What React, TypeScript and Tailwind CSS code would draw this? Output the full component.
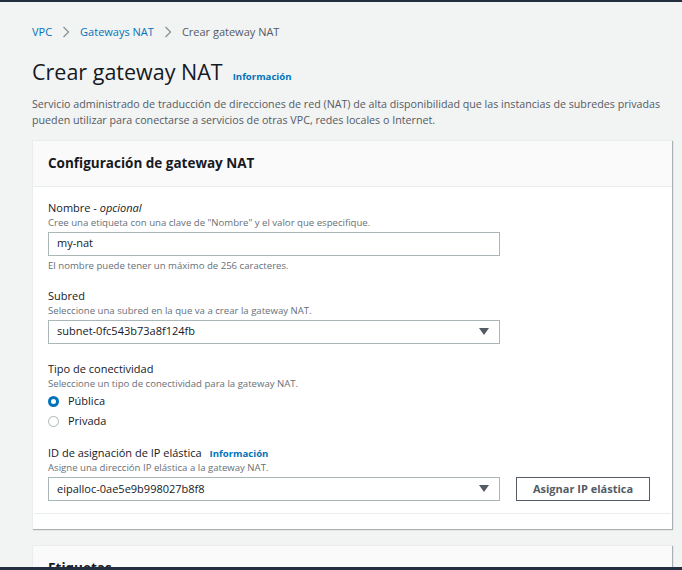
import React from "react";

const font = { fontFamily: '"Open Sans", "Noto Sans", sans-serif' };

function Caret() {
  return (
    <svg width="10" height="7" viewBox="0 0 10 7" className="shrink-0">
      <path d="M0 0 H10 L5 7 Z" fill="#545b64" />
    </svg>
  );
}

function Chevron() {
  return (
    <svg width="8" height="12" viewBox="0 0 8 12" className="mx-[10px]">
      <path d="M1.5 1 L6.5 6 L1.5 11" fill="none" stroke="#879596" strokeWidth="1.3" />
    </svg>
  );
}

function Select({ value }: { value: string }) {
  return (
    <div className="flex h-[24px] w-[452px] items-center justify-between border border-[#aab7b8] bg-white pl-[8px] pr-[10px] text-[11px] text-[#16191f]">
      <span>{value}</span>
      <Caret />
    </div>
  );
}

function Radio({ checked, label }: { checked: boolean; label: string }) {
  return (
    <div className="flex h-[20px] items-center gap-[9px]">
      {checked ? (
        <span className="box-border h-[11px] w-[11px] rounded-full border-[3px] border-[#0073bb] bg-white" />
      ) : (
        <span className="box-border h-[11px] w-[11px] rounded-full border border-[#aab7b8] bg-white" />
      )}
      <span className="text-[11px] text-[#16191f]">{label}</span>
    </div>
  );
}

export default function App() {
  return (
    <div style={font} className="flex h-[570px] w-[682px] flex-col overflow-hidden bg-[#f2f3f3]">
      <div className="h-[2px] shrink-0 bg-[#232f3e]" />
      <div className="flex flex-1 flex-col overflow-hidden pl-[32px] pr-[10px]">
        <div className="mt-[22px] flex h-[18px] items-center text-[11px]">
          <span className="text-[#0073bb]">VPC</span>
          <Chevron />
          <span className="text-[#0073bb]">Gateways NAT</span>
          <Chevron />
          <span className="text-[#545b64]">Crear gateway NAT</span>
        </div>
        <div className="mt-[15px] flex items-baseline gap-[10px]">
          <h1 className="text-[21.5px] leading-[32px] text-[#16191f]">Crear gateway NAT</h1>
          <span className="text-[9.6px] font-bold text-[#0073bb]">Información</span>
        </div>
        <p className="mt-[8px] w-[650px] text-[10.7px] leading-[16px] text-[#545b64]">
          Servicio administrado de traducción de direcciones de red (NAT) de alta disponibilidad que las instancias de subredes privadas pueden utilizar para conectarse a servicios de otras VPC, redes locales o Internet.
        </p>
        <div className="mt-[12px] w-[640px] shrink-0 border-t border-l border-[#eaeded] bg-white shadow-[1px_1px_1px_0_rgba(0,28,36,0.3)]">
          <div className="flex h-[46px] items-center border-b border-[#eaeded] bg-[#fafafa] px-[15px]">
            <h2 className="text-[13.5px] font-bold text-[#16191f]">Configuración de gateway NAT</h2>
          </div>
          <div className="px-[15px] pt-[13px]">
            <div className="text-[11px] leading-[16px] text-[#16191f]">
              Nombre - <i>opcional</i>
            </div>
            <div className="text-[9.6px] leading-[13px] text-[#687078]">
              Cree una etiqueta con una clave de "Nombre" y el valor que especifique.
            </div>
            <div className="mt-[3px] flex h-[24px] w-[452px] items-center border border-[#aab7b8] bg-white px-[8px] text-[11px] text-[#16191f]">
              my-nat
            </div>
            <div className="mt-[3px] text-[9.6px] leading-[13px] text-[#687078]">
              El nombre puede tener un máximo de 256 caracteres.
            </div>

            <div className="mt-[16px] text-[11px] leading-[16px] text-[#16191f]">Subred</div>
            <div className="text-[9.6px] leading-[13px] text-[#687078]">
              Seleccione una subred en la que va a crear la gateway NAT.
            </div>
            <div className="mt-[3px]">
              <Select value="subnet-0fc543b73a8f124fb" />
            </div>

            <div className="mt-[17px] text-[11px] leading-[16px] text-[#16191f]">Tipo de conectividad</div>
            <div className="text-[9.6px] leading-[13px] text-[#687078]">
              Seleccione un tipo de conectividad para la gateway NAT.
            </div>
            <div className="mt-[2px]">
              <Radio checked label="Pública" />
              <Radio checked={false} label="Privada" />
            </div>

            <div className="mt-[13px] flex items-baseline gap-[8px]">
              <span className="text-[11px] leading-[16px] text-[#16191f]">ID de asignación de IP elástica</span>
              <span className="text-[9.6px] font-bold text-[#0073bb]">Información</span>
            </div>
            <div className="text-[9.6px] leading-[13px] text-[#687078]">
              Asigne una dirección IP elástica a la gateway NAT.
            </div>
            <div className="mt-[3px] flex items-center gap-[16px]">
              <Select value="eipalloc-0ae5e9b998027b8f8" />
              <button className="h-[24px] w-[134px] border border-[#545b64] bg-white text-[11px] font-bold text-[#545b64]">
                Asignar IP elástica
              </button>
            </div>
          </div>
          <div className="mx-[1px] mt-[12px] h-[16px] border-t border-[#eaeded]" />
        </div>
        <div className="mt-[16px] h-[40px] w-[640px] shrink-0 border-t border-l border-[#eaeded] bg-[#fafafa] shadow-[1px_1px_1px_0_rgba(0,28,36,0.3)]">
          <h2 className="px-[15px] pt-[12px] text-[13.5px] font-bold text-[#16191f]">Etiquetas</h2>
        </div>
      </div>
      <div className="h-[3px] shrink-0 bg-[#232f3e]" />
    </div>
  );
}
